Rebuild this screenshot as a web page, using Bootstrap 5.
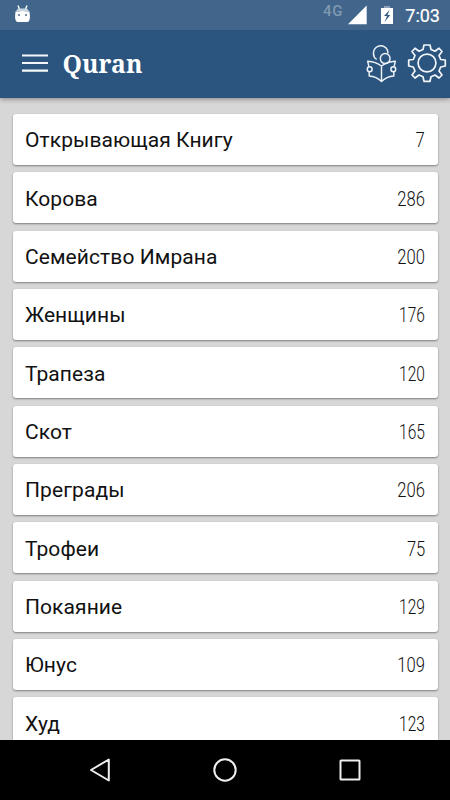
<!DOCTYPE html>
<html lang="ru">
<head>
<meta charset="utf-8">
<meta name="viewport" content="width=device-width, initial-scale=1">
<title>Quran</title>
<link href="https://cdn.jsdelivr.net/npm/bootstrap@5.3.0/dist/css/bootstrap.min.css" rel="stylesheet">
<style>
body{font-family:Roboto,"Noto Sans",sans-serif;background:#d7d7d7;color:#111}
svg{display:block;flex:none}
.statusbar{height:30px;background:#42668b;padding-left:14px;padding-right:10px;z-index:2}
.net{font-size:15px;font-weight:500;letter-spacing:.8px;line-height:1;color:#8098b1;margin:-7px 5px 0 0}
.battery{margin-left:14px}
.clock{font-size:18px;font-weight:400;-webkit-text-stroke:.2px #fff;line-height:1;margin:2px 0 0 12px}
.appbar{height:68px;background:#2b557f;padding:0 3px 0 22px;box-shadow:0 1px 5px rgba(0,0,0,.4);z-index:1}
.title{font-family:"Noto Serif","DejaVu Serif Condensed","DejaVu Serif",serif;font-weight:700;font-size:24.8px;line-height:1;margin:-1px 0 0 14.5px}
.reader{margin-right:10px}
.surahs{padding:16px 12.5px 0;gap:7.33px;min-height:0}
.surah{height:51px;flex:none;border-radius:3px;padding:3px 12.5px 0;box-shadow:0 1px 2px rgba(0,0,0,.42)}
.surah-name{font-size:21px;letter-spacing:.08px;line-height:1.2}
.ayahs{font-size:21px;font-weight:300;line-height:1.2;transform:scaleX(.79);transform-origin:right}
.ayahs.slim{transform:scaleX(.74)}
.softkeys{height:60px;background:#000;padding:0 38px}
</style>
<script src="https://cdn.jsdelivr.net/npm/bootstrap@5.3.0/dist/js/bootstrap.bundle.min.js"></script>
</head>
<body class="vh-100 d-flex flex-column overflow-hidden">
<div class="statusbar d-flex align-items-center text-white flex-shrink-0 position-relative">
  <svg width="17" height="20" viewBox="0 0 17 20"><path d="M4 .5l1.600 4M13 .5l-1.600 4" stroke="#fff" stroke-width="1.400"/><path d="M4 3.500h9l2 2.500H2z" fill="#c8d5e1"/><path d="M1.500 6.500Q8.500 5.500 15.500 6.500Q17 17 13.500 17H3.500Q0 17 1.500 6.500Z" fill="#fff"/><path d="M4 9h2v2H4zM11 9h2v2h-2z" fill="#7890a9"/></svg>
  <span class="net ms-auto">4G</span>
  <svg width="19" height="20" viewBox="0 0 19 20"><path d="M0 19.300L18.700 .6V19.300Z" fill="#fff"/></svg>
  <svg class="battery" width="12" height="20" viewBox="0 0 12 20"><path d="M3 1h6v2H3z" fill="#8ca3ba"/><path d="M0 3h12v16H0z" fill="#fff"/><path d="M8.500 5L3 11h3l-2.500 6L9.300 10H6.500Z" fill="#345a82"/></svg>
  <span class="clock">7:03</span>
</div>
<nav class="appbar d-flex align-items-center text-white flex-shrink-0 position-relative">
  <svg width="26" height="20" viewBox="0 0 26 20"><path d="M0 1.500h26M0 9h26M0 16.600h26" stroke="#f4f7fa" stroke-width="2.200"/></svg>
  <span class="title">Quran</span>
  <svg class="reader ms-auto" width="31" height="40" viewBox="0 1 32 40" preserveAspectRatio="none" fill="none" stroke="#eef3f8" stroke-width="1.500" stroke-linejoin="round"><path d="M11 16.500A7.500 7.500 0 1 1 22.700 10.500"/><circle cx="19.800" cy="15.600" r="5"/><path d="M16 23Q10 18.500 1.700 18.200L3 23.700M3.300 28.700V33Q11 33.500 16 38.500Q21 33.500 28.700 33V28.700M29 23.700L30.300 18.200Q22 18.500 16 23V38.500"/><circle cx="3.800" cy="26.200" r="2.500"/><circle cx="28.200" cy="26.200" r="2.500"/></svg>
  <svg class="gear" width="40" height="40" viewBox="-20 -19 40 40" fill="none" stroke="#f2f6fa" stroke-width="1.700" stroke-linejoin="round"><circle r="8.900"/><path d="M-3-18H3L4-13.500L8-11.800L12-14.800L15-11.500L12-7.500L13.700-3.500L18.300-3V3L13.700 4L12 8L15 12L12 15L8 12L4 13.700L3 18.300H-3L-4 13.700L-8 12L-12 15L-15 12L-12 8L-13.700 4L-18.300 3V-3L-13.700-3.500L-12-7.500L-15-11.500L-12-14.800L-8-11.800L-4-13.500Z"/></svg>
</nav>
<main class="surahs d-flex flex-column flex-grow-1 overflow-hidden">
  <div class="surah bg-white d-flex align-items-center justify-content-between"><span class="surah-name">Открывающая Книгу</span><span class="ayahs">7</span></div>
  <div class="surah bg-white d-flex align-items-center justify-content-between"><span class="surah-name">Корова</span><span class="ayahs">286</span></div>
  <div class="surah bg-white d-flex align-items-center justify-content-between"><span class="surah-name">Семейство Имрана</span><span class="ayahs">200</span></div>
  <div class="surah bg-white d-flex align-items-center justify-content-between"><span class="surah-name">Женщины</span><span class="ayahs slim">176</span></div>
  <div class="surah bg-white d-flex align-items-center justify-content-between"><span class="surah-name">Трапеза</span><span class="ayahs slim">120</span></div>
  <div class="surah bg-white d-flex align-items-center justify-content-between"><span class="surah-name">Скот</span><span class="ayahs slim">165</span></div>
  <div class="surah bg-white d-flex align-items-center justify-content-between"><span class="surah-name">Преграды</span><span class="ayahs">206</span></div>
  <div class="surah bg-white d-flex align-items-center justify-content-between"><span class="surah-name">Трофеи</span><span class="ayahs">75</span></div>
  <div class="surah bg-white d-flex align-items-center justify-content-between"><span class="surah-name">Покаяние</span><span class="ayahs slim">129</span></div>
  <div class="surah bg-white d-flex align-items-center justify-content-between"><span class="surah-name">Юнус</span><span class="ayahs">109</span></div>
  <div class="surah bg-white d-flex align-items-center justify-content-between"><span class="surah-name">Худ</span><span class="ayahs slim">123</span></div>
</main>
<footer class="softkeys d-flex align-items-center flex-shrink-0">
  <div class="flex-fill d-flex justify-content-center"><svg width="24" height="26" viewBox="0 0 24 26"><path d="M20.800 2.500V23.500L3 13Z" fill="none" stroke="#eee" stroke-width="2" stroke-linejoin="round"/></svg></div>
  <div class="flex-fill d-flex justify-content-center"><svg width="24" height="24" viewBox="0 0 24 24"><circle cx="12" cy="12" r="10.700" fill="none" stroke="#eee" stroke-width="2"/></svg></div>
  <div class="flex-fill d-flex justify-content-center"><svg width="24" height="24" viewBox="0 0 24 24"><rect x="2.500" y="2.500" width="19" height="19" rx=".6" fill="none" stroke="#eee" stroke-width="2"/></svg></div>
</footer>
</body>
</html>
